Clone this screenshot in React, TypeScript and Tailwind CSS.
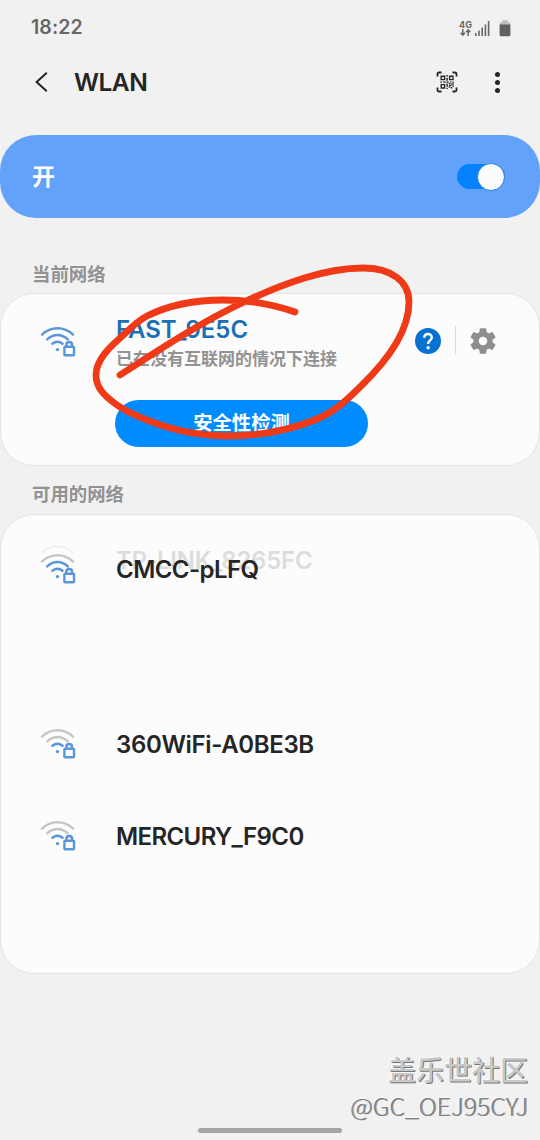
interface Network {
	name: string;
	level: number;
	tracking: string;
	gapBefore?: string;
	ghost?: string;
}

const networks: Network[] = [
	{ name: "CMCC-pLFQ", level: 2, tracking: "tracking-[-0.55px]", ghost: "TP-LINK_8265FC" },
	{ name: "360WiFi-A0BE3B", level: 1, tracking: "tracking-[-0.35px]", gapBefore: "mt-[83px]" },
	{ name: "MERCURY_F9C0", level: 1, tracking: "tracking-[-0.6px]" },
];

// level is the number of lit arcs, from 1 to 3
const WifiLock = ({ level }: { level: number }) => {
	const color = (n: number) => (level >= n ? "#5a97da" : "#c6c6c6");
	return (
		<svg
			width="36"
			height="32"
			viewBox="0 0 36 32"
			fill="none"
			strokeWidth="2.4"
			strokeLinecap="round"
			className="block shrink-0"
		>
			<path d="M2 9.6C11 1.2 24 1.2 33 9.6" stroke={color(3)} />
			<path d="M7.2 14.4C13.6 8.6 21.4 8.6 27.8 14.4" stroke={color(2)} />
			<path d="M12.4 18.8C15.6 16.2 19.4 16.2 22.6 18.8" stroke={color(1)} />
			<circle cx="17.5" cy="24.6" r="1.7" fill="#5a97da" />
			<path d="M22.5 20.5h12v11h-12z" fill="#fcfcfc" />
			<rect x="24.4" y="21.8" width="9.6" height="8.4" rx="0.8" stroke="#5a97da" />
			<path d="M26.3 21.5v-1.6a2.9 2.9 0 0 1 5.8 0v1.6" stroke="#5a97da" />
		</svg>
	);
};

const StatusBar = () => (
	<div className="flex h-14 items-center justify-between pr-[29px] pl-[31px] text-[#666]">
		<span className="text-[19.5px] font-semibold tracking-[0.1px]">18:22</span>
		<div className="flex items-center">
			<div className="mr-[3px] flex w-[13px] flex-col items-center">
				<span className="text-[9px] leading-[9px] font-bold">4G</span>
				<svg width="11" height="7" viewBox="0 0 11 7" fill="none" stroke="#666" strokeWidth="1.5">
					<path d="M2.8 0v6M.6 3.8l2.2 2.3L5 3.8M8.2 7V1M6 3.2L8.2.9l2.2 2.3" />
				</svg>
			</div>
			<svg width="15" height="15" viewBox="0 0 15 15" fill="#666">
				<rect x="0" y="12" width="1.6" height="3" />
				<rect x="3.2" y="9.5" width="1.6" height="5.5" />
				<rect x="6.4" y="6.5" width="1.6" height="8.5" />
				<rect x="9.6" y="3.5" width="1.6" height="11.5" />
				<rect x="12.8" y="0" width="1.6" height="15" />
			</svg>
			<svg width="12" height="17" viewBox="0 0 12 17" className="ml-[9px]">
				<path d="M3.2 1q0-.8.8-.8h4q.8 0 .8.8v1.2H10q1.4 0 1.4 1.4V5H.6V3.6Q.6 2.2 2 2.2h1.2z" fill="#bdbdbd" />
				<path d="M.6 4.6h10.8V15q0 1.3-1.3 1.3H1.9Q.6 16.3.6 15z" fill="#606060" />
			</svg>
		</div>
	</div>
);

const QrScan = () => (
	<svg width="22" height="22" viewBox="0 0 22 22" fill="none" stroke="#252525">
		<path
			d="M1.5 5.5V3q0-1.5 1.5-1.5h2.5M16.5 1.5H19q1.5 0 1.5 1.5v2.5M20.5 16.5V19q0 1.5-1.5 1.5h-2.5M5.5 20.5H3q-1.5 0-1.5-1.5v-2.5"
			strokeWidth="1.8"
		/>
		<path d="M5.2 5.2h3.4v3.4H5.2zM13.6 5.2H17v3.4h-3.4zM5.2 13.6h3.4V17H5.2z" strokeWidth="1.4" />
		<path
			d="M11.1 4v1.4M11.1 6.8v3M4.3 11.1h1.6M7.2 11.1h2.5M10.4 11.1h2.3M14 11.1h1.4M16.5 11.1h1.3M11.1 12.5v3.2M11.1 16.7v1.2M12.7 12.6h1.6M13.1 14.4h2.4M15.4 13h2.3M12.7 16h1.5M14.8 16.7h1.5M16.5 15h1.3"
			strokeWidth="1.4"
		/>
	</svg>
);

const Header = () => (
	<header className="flex h-[52px] items-center pr-10 pl-[34px] text-[#252525]">
		<svg width="14" height="20" viewBox="0 0 14 20" fill="none" stroke="#252525" strokeWidth="2">
			<path d="M12.8.8L2.6 10l10.2 9.2" />
		</svg>
		<h1 className="ml-[26px] flex-1 text-[24.5px] font-semibold tracking-[-0.5px]">WLAN</h1>
		<QrScan />
		<div className="ml-[37px] flex flex-col gap-[3px]">
			<i className="size-[5px] rounded-full bg-[#252525]" />
			<i className="size-[5px] rounded-full bg-[#252525]" />
			<i className="size-[5px] rounded-full bg-[#252525]" />
		</div>
	</header>
);

const SectionLabel = ({ text }: { text: string }) => (
	<h2 className="pl-8 text-[18.4px] leading-6 font-bold text-[#929292]">{text}</h2>
);

const CurrentNetwork = () => (
	<section className="mt-[7px] flex h-[173px] rounded-[34px] border border-[#e4e4e4] bg-[#fcfcfc] pl-[39px]">
		<div className="mt-[31px]">
			<WifiLock level={3} />
		</div>
		<div className="ml-[39px] w-[253px]">
			<p className="mt-5 pl-px text-[24px] leading-8 font-semibold text-[#1a6fb5]">FAST_9E5C</p>
			<p className="mt-px pl-px text-[17px] leading-6 font-bold whitespace-nowrap text-[#929292]">
				已在没有互联网的情况下连接
			</p>
			<button className="mt-[29px] h-[47px] w-full rounded-full bg-[#008cff] text-[19.3px] font-bold text-white">
				安全性检测
			</button>
		</div>
		<div className="mt-[33px] ml-[47px] flex h-[27px] items-center">
			<svg width="26" height="26" viewBox="0 0 26 26" className="shrink-0">
				<circle cx="13" cy="13" r="13" fill="#0872d0" />
				<path
					d="M9.3 9.7C9.3 4.8 16.8 4.8 16.8 9.5C16.8 12.3 13.1 12.5 13.1 15.9"
					fill="none"
					stroke="#fff"
					strokeWidth="2.4"
				/>
				<circle cx="13.1" cy="19.7" r="1.7" fill="#fff" />
			</svg>
			<div className="ml-3.5 h-[29px] w-px bg-[#dcdcdc]" />
			<svg width="32" height="32" viewBox="0 0 24 24" fill="#8e8e8e" className="ml-[11px] shrink-0">
				<path d="M19.14 12.94c.04-.3.06-.61.06-.94 0-.32-.02-.64-.07-.94l2.03-1.58c.18-.14.23-.41.12-.61l-1.92-3.32c-.12-.22-.37-.29-.59-.22l-2.39.96c-.5-.38-1.03-.7-1.62-.94l-.36-2.54c-.04-.24-.24-.41-.48-.41h-3.84c-.24 0-.43.17-.47.41l-.36 2.54c-.59.24-1.13.57-1.62.94l-2.39-.96c-.22-.08-.47 0-.59.22L2.74 8.87c-.12.21-.08.47.12.61l2.03 1.58c-.05.3-.09.63-.09.94s.02.64.07.94l-2.03 1.58c-.18.14-.23.41-.12.61l1.92 3.32c.12.22.37.29.59.22l2.39-.96c.5.38 1.03.7 1.62.94l.36 2.54c.05.24.24.41.48.41h3.84c.24 0 .44-.17.47-.41l.36-2.54c.59-.24 1.13-.56 1.62-.94l2.39.96c.22.08.47 0 .59-.22l1.92-3.32c.12-.22.07-.47-.12-.61l-2.01-1.58zM12 15.2c-1.77 0-3.2-1.43-3.2-3.2s1.43-3.2 3.2-3.2 3.2 1.43 3.2 3.2-1.43 3.2-3.2 3.2z" />
			</svg>
		</div>
	</section>
);

const NetworkRow = ({ network }: { network: Network }) => (
	<div className={`relative flex h-[92px] items-center pl-[39px] ${network.gapBefore ?? ""}`}>
		{/* the entry that is fading out behind this one */}
		{network.ghost && (
			<>
				<svg width="36" height="12" viewBox="0 0 36 12" fill="none" className="absolute top-[21px] left-[39px]">
					<path d="M2 9.6C11 1.2 24 1.2 33 9.6" stroke="#f0f0f0" strokeWidth="2" />
				</svg>
				<span className="absolute top-[23px] left-[115px] text-[24px] leading-8 font-semibold tracking-[-0.25px] text-[#dcdcdc]">
					{network.ghost}
				</span>
			</>
		)}
		<WifiLock level={network.level} />
		<span className={`relative ml-10 pt-1 text-[24px] leading-8 font-semibold text-[#252525] ${network.tracking}`}>
			{network.name}
		</span>
	</div>
);

const App = () => {
	return (
		<div className="relative flex h-[1140px] w-[540px] flex-col overflow-hidden bg-[#f1f1f1] font-[Inter,'Noto_Sans_CJK_SC',sans-serif]">
			<StatusBar />
			<Header />

			<div className="mt-[27px] flex h-[83px] items-center justify-between rounded-[36px] bg-[#62a2fa] pr-[35px] pl-8">
				<span className="pt-px text-[23px] font-bold text-white">开</span>
				<div className="flex h-[25px] w-12 items-center justify-end rounded-full bg-[#0381fe]">
					<div className="size-7 shrink-0 rounded-full border border-[#2b82dc] bg-[#fcfcfc]" />
				</div>
			</div>

			<div className="mt-11">
				<SectionLabel text="当前网络" />
			</div>
			<CurrentNetwork />

			<div className="mt-4">
				<SectionLabel text="可用的网络" />
			</div>
			<section className="mt-2 h-[460px] rounded-[34px] border border-[#e4e4e4] bg-[#fcfcfc] pt-[7px]">
				{networks.map((network) => (
					<NetworkRow key={network.name} network={network} />
				))}
			</section>

			{/* Hand-drawn marker loop */}
			<svg
				width="540"
				height="1140"
				viewBox="0 0 540 1140"
				fill="none"
				className="pointer-events-none absolute inset-0"
			>
				<path
					d="M120 375C160 349 203 321 245 301.5C284 283.5 325 268 363 268C391 268 409 281 409 302C409 332 385 363 360 387C347 400 334 412 317 419C288 431 257 436 227 436C205 436 187 433 167 427C148 421 130 414 117 405C103 395 96 387 96 375C96 360 110 347 119 339C130 329 137 321 147 316C171 304 196 300 223 300C248 300 272 304 295 312"
					stroke="#f03a17"
					strokeWidth="6.8"
					strokeLinecap="round"
					strokeLinejoin="round"
				/>
			</svg>

			{/* Community watermark */}
			<div className="absolute right-3 bottom-[17px] text-right font-['Noto_Sans_CJK_SC',sans-serif] whitespace-nowrap">
				<p className="text-[28px] leading-[36px] font-medium text-[#c8c8c8] [text-shadow:1px_1px_0_#777,-1px_-1px_0_#fafafa]">
					盖乐世社区
				</p>
				<p className="text-[24.8px] leading-[36px] font-light text-[#808080] [text-shadow:-1px_-1px_0_#fafafa,1px_0_0_#999]">
					@GC_OEJ95CYJ
				</p>
			</div>
			<div className="absolute bottom-[7px] left-[198px] h-[5px] w-36 rounded-full bg-[#a5a5a5]" />
		</div>
	);
};

export default App;
